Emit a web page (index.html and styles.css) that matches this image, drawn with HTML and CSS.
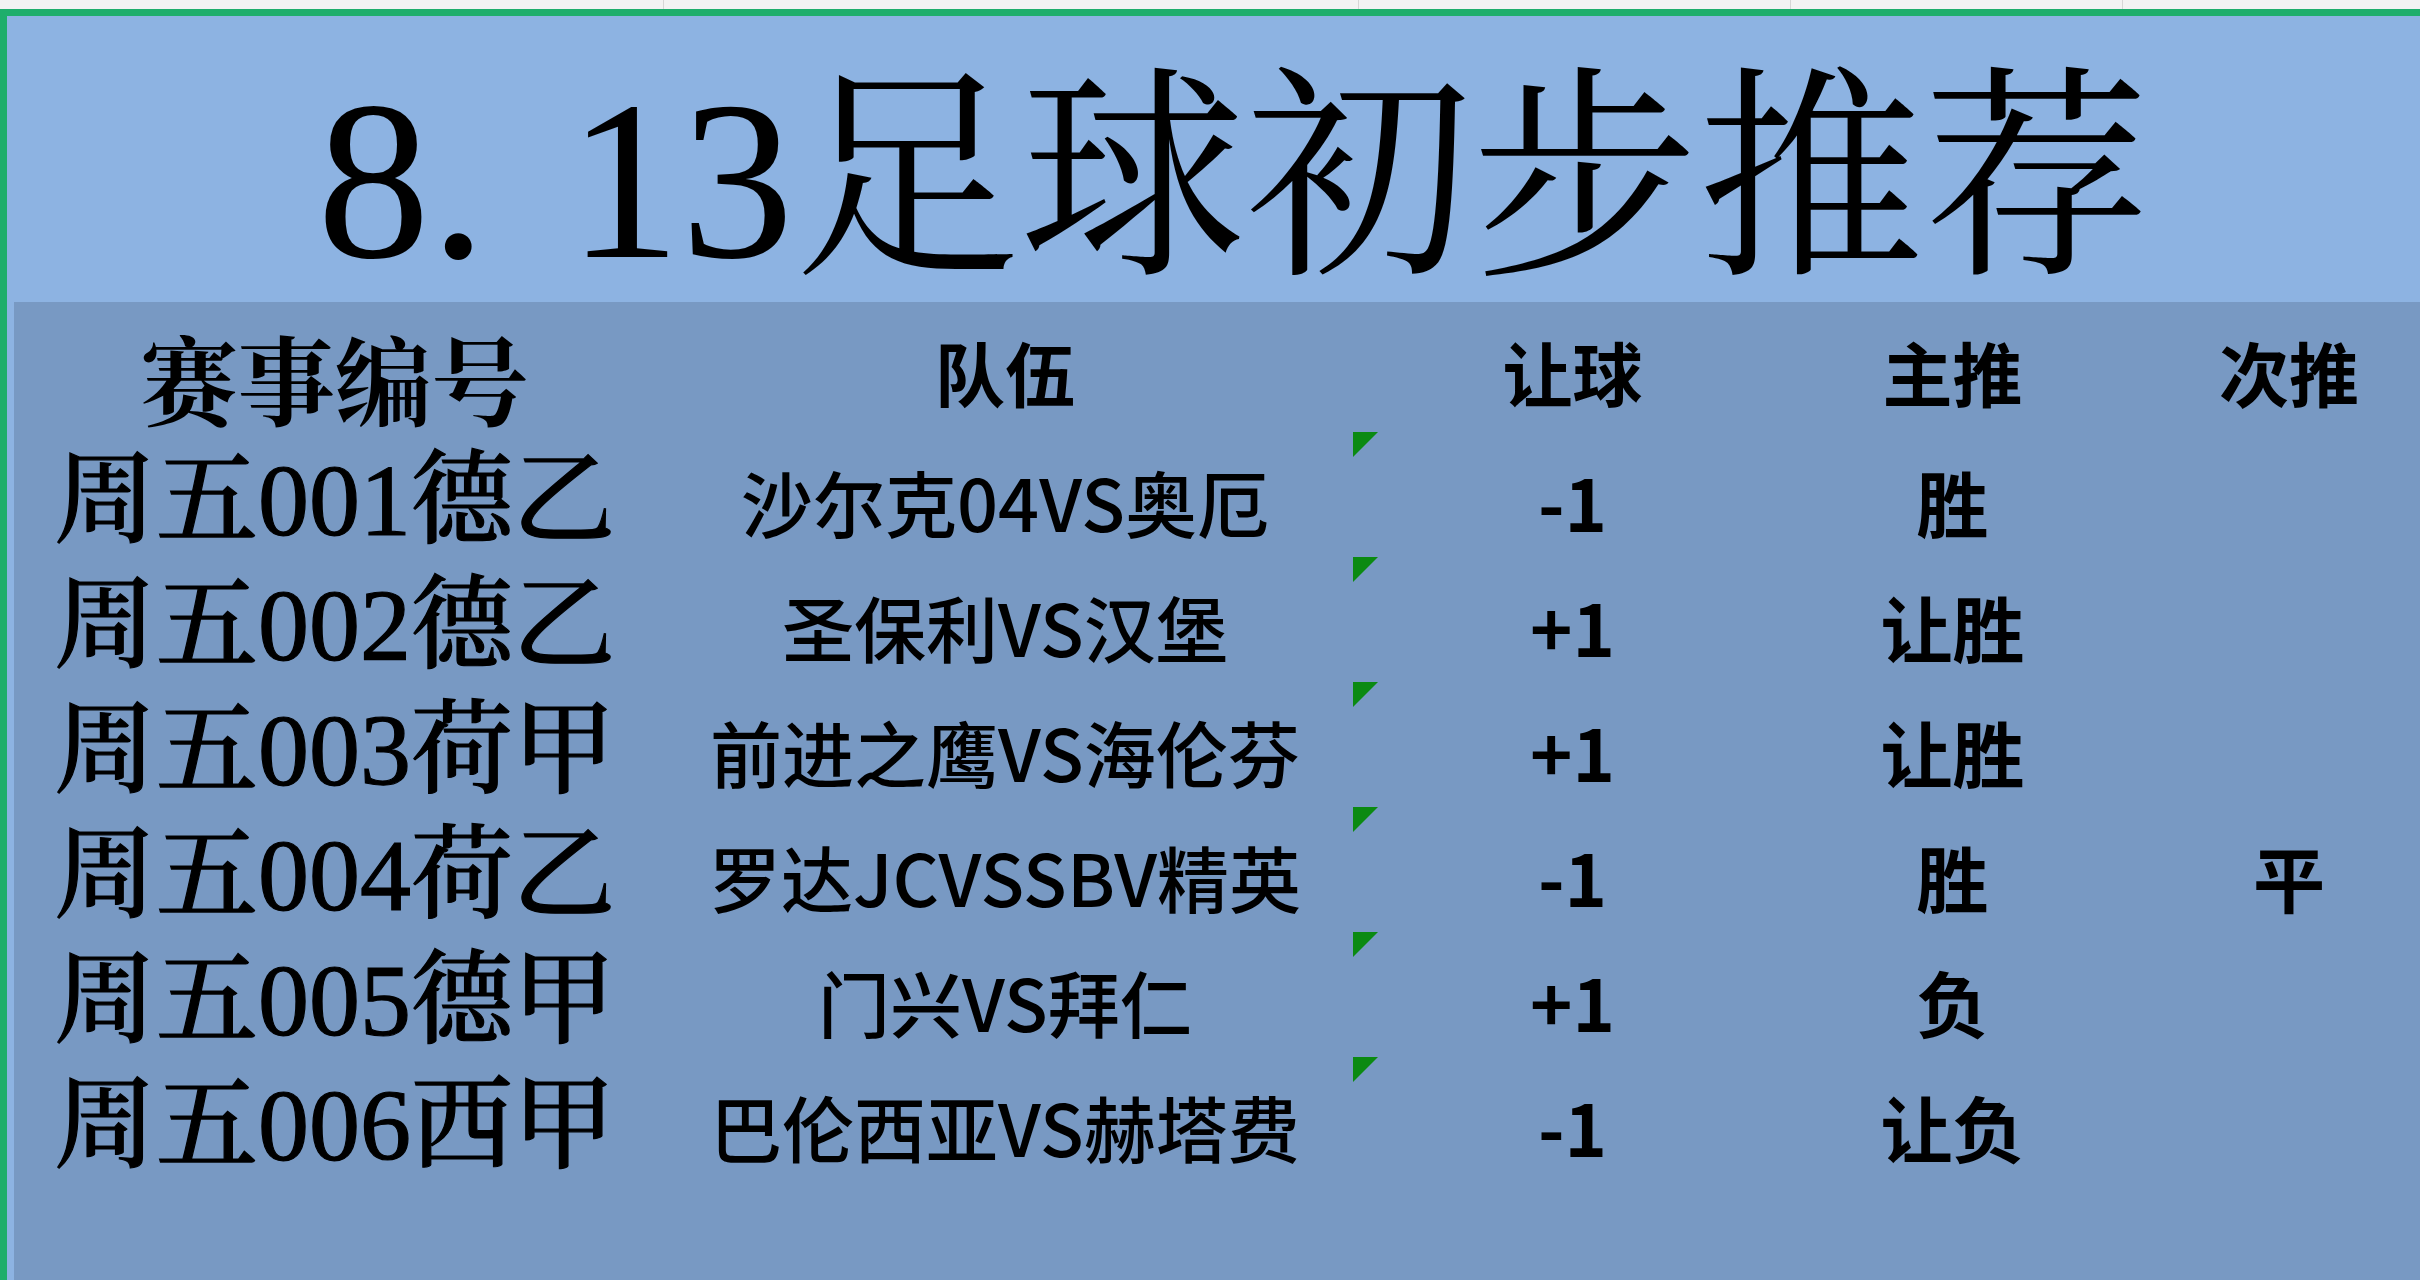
FILE: index.html
```html
<!DOCTYPE html>
<html lang="zh-CN">
<head>
<meta charset="utf-8">
<title>8.13足球初步推荐</title>
<link rel="stylesheet" href="styles.css">
</head>
<body>
<div class="sheet">
  <div class="topstrip">
    <span class="gl gl1"></span><span class="gl gl2"></span><span class="gl gl3"></span><span class="gl gl4"></span>
  </div>
  <div class="frame">
    <div class="title"><span class="num">8.</span><span class="num">13</span>足球初步推荐</div>
    <div class="body">
      <div class="grid">
        <div class="cell h h1">赛事编号</div>
        <div class="cell h">队伍</div>
        <div class="cell h">让球</div>
        <div class="cell h">主推</div>
        <div class="cell h">次推</div>

        <div class="cell c1">周五001德乙</div>
        <div class="cell c2">沙尔克04VS奥厄</div>
        <div class="cell c3 tri">-1</div>
        <div class="cell c4">胜</div>
        <div class="cell c5"></div>

        <div class="cell c1">周五002德乙</div>
        <div class="cell c2">圣保利VS汉堡</div>
        <div class="cell c3 tri">+1</div>
        <div class="cell c4">让胜</div>
        <div class="cell c5"></div>

        <div class="cell c1">周五003荷甲</div>
        <div class="cell c2">前进之鹰VS海伦芬</div>
        <div class="cell c3 tri">+1</div>
        <div class="cell c4">让胜</div>
        <div class="cell c5"></div>

        <div class="cell c1">周五004荷乙</div>
        <div class="cell c2">罗达JCVSSBV精英</div>
        <div class="cell c3 tri">-1</div>
        <div class="cell c4">胜</div>
        <div class="cell c5">平</div>

        <div class="cell c1">周五005德甲</div>
        <div class="cell c2">门兴VS拜仁</div>
        <div class="cell c3 tri">+1</div>
        <div class="cell c4">负</div>
        <div class="cell c5"></div>

        <div class="cell c1">周五006西甲</div>
        <div class="cell c2">巴伦西亚VS赫塔费</div>
        <div class="cell c3 tri">-1</div>
        <div class="cell c4">让负</div>
        <div class="cell c5"></div>
      </div>
    </div>
  </div>
</div>
</body>
</html>
```
FILE: styles.css
```css
html, body {
  margin: 0;
  padding: 0;
  background: #ffffff;
}
.sheet {
  width: 2420px;
  height: 1280px;
  overflow: hidden;
  display: flex;
  flex-direction: column;
}
.topstrip {
  height: 9px;
  background: #f3f3f3;
  position: relative;
  flex: none;
}
.gl {
  position: absolute;
  top: 0;
  bottom: 0;
  width: 1px;
  background: #d6d6d6;
}
.gl1 { left: 663px; }
.gl2 { left: 1358px; }
.gl3 { left: 1790px; }
.gl4 { left: 2122px; }
.frame {
  flex: 1;
  border-top: 7px solid #1fae6c;
  border-left: 7px solid #1fae6c;
  background: #8db3e2;
  display: flex;
  flex-direction: column;
  min-height: 0;
}
.title {
  height: 286px;
  box-sizing: border-box;
  padding-top: 52px;
  padding-left: 310px;
  font-family: "Liberation Serif", "Noto Serif CJK SC", "Noto Sans CJK SC", serif;
  font-size: 226px;
  line-height: 1;
  color: #000;
  white-space: nowrap;
  flex: none;
}
.title .num:first-child {
  margin-right: 0.36em;
}
.body {
  flex: 1;
  margin-left: 7px;
  background: #7899c3;
  overflow: hidden;
}
.grid {
  display: grid;
  grid-template-columns: 641px 700px 435px 325px 348px;
  grid-template-rows: 132px repeat(6, 125px);
  width: 2449px;
}
.cell {
  display: flex;
  align-items: center;
  justify-content: center;
  white-space: nowrap;
  color: #000;
  font-family: "Noto Sans CJK SC", sans-serif;
  line-height: 1;
  padding-top: 8px;
  box-sizing: border-box;
}
.h {
  font-size: 70px;
  font-weight: 700;
}
.h1 {
  font-family: "Noto Serif CJK SC", "Noto Sans CJK SC", serif;
  font-size: 97px;
  font-weight: 700;
  padding-top: 16px;
}
.c1 {
  font-family: "Liberation Serif", "Noto Serif CJK SC", "Noto Sans CJK SC", serif;
  font-size: 102px;
  font-weight: 500;
  -webkit-text-stroke: 1.2px #000;
}
.c2 {
  font-size: 72px;
  font-weight: 500;
}
.c3, .c4, .c5 {
  font-size: 72px;
  font-weight: 700;
}
.tri {
  position: relative;
}
.tri::before {
  content: "";
  position: absolute;
  left: -2px;
  top: -2px;
  border-top: 25px solid #0b8a12;
  border-right: 25px solid transparent;
}
```
